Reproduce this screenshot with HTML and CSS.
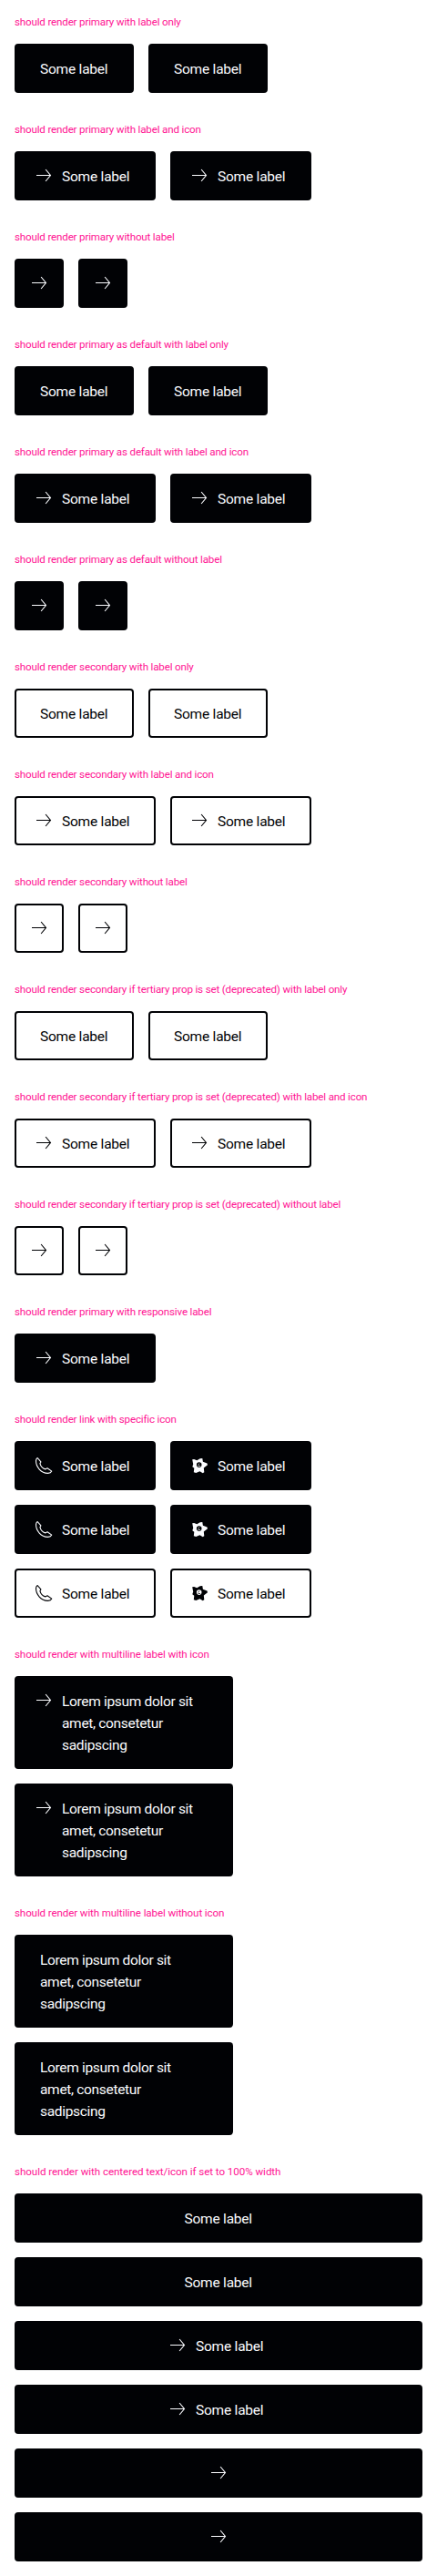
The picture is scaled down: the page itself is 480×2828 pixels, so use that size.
FILE: index.html
```html
<!DOCTYPE html>
<html lang="en">
<head>
<meta charset="utf-8">
<title>Link Pure Overview</title>
<link rel="stylesheet" href="styles.css">
</head>
<body>
<svg class="sprite" aria-hidden="true">
  <symbol id="arrow" viewBox="0 0 24 24"><path d="M4 11.5h15.500M14.100 5l5.400 6.500-5.400 6.500" fill="none" stroke="currentColor" stroke-width="1.1"/></symbol>
  <symbol id="phone" viewBox="0 0 24 24"><path d="M5.200 3.500 8.900 7.900 7.900 9.700c.8 3 2.800 5.300 5.800 6.200l2.300-1.100 4.800 3.300c-.8 1.700-2.300 2.400-4.400 2.300C9.200 20.100 3.400 13.600 3.500 6.600c.1-1.500.7-2.500 1.700-3.100z" fill="none" stroke="currentColor" stroke-width="1.1" stroke-linejoin="round"/></symbol>
  <symbol id="star" viewBox="0 0 24 24"><path fill="currentColor" fill-rule="evenodd" d="M4.200 5.200 6.200 5 9.300 6.200 12.700 4.300 15.300 4 15.900 7.800 20.500 9.600 21 11.200 16.800 14.500 17.300 19.200 15.700 20.200 12.500 18.300 8.300 20 5.800 19.300 6.300 14.800 4.300 13.300 5.200 10.600zM11.700 8.300a2.800 2.800 0 1 0 0 5.600 2.800 2.800 0 0 0 0-5.600z"/><path d="M10.300 11.300 12.200 9.700M10.500 12.700 13 12.400" fill="none" stroke="currentColor" stroke-width=".8"/></symbol>
</svg>
<main class="page">
  <section class="group"><h2 class="title">should render primary with label only</h2>
    <div class="row"><a class="btn"><span class="label">Some label</span></a><a class="btn"><span class="label">Some label</span></a></div></section>
  <section class="group"><h2 class="title">should render primary with label and icon</h2>
    <div class="row"><a class="btn has-icon"><svg class="icon"><use href="#arrow"/></svg><span class="label">Some label</span></a><a class="btn has-icon"><svg class="icon"><use href="#arrow"/></svg><span class="label">Some label</span></a></div></section>
  <section class="group"><h2 class="title">should render primary without label</h2>
    <div class="row"><a class="btn icon-only"><svg class="icon"><use href="#arrow"/></svg></a><a class="btn icon-only"><svg class="icon"><use href="#arrow"/></svg></a></div></section>
  <section class="group"><h2 class="title">should render primary as default with label only</h2>
    <div class="row"><a class="btn"><span class="label">Some label</span></a><a class="btn"><span class="label">Some label</span></a></div></section>
  <section class="group"><h2 class="title">should render primary as default with label and icon</h2>
    <div class="row"><a class="btn has-icon"><svg class="icon"><use href="#arrow"/></svg><span class="label">Some label</span></a><a class="btn has-icon"><svg class="icon"><use href="#arrow"/></svg><span class="label">Some label</span></a></div></section>
  <section class="group"><h2 class="title">should render primary as default without label</h2>
    <div class="row"><a class="btn icon-only"><svg class="icon"><use href="#arrow"/></svg></a><a class="btn icon-only"><svg class="icon"><use href="#arrow"/></svg></a></div></section>
  <section class="group"><h2 class="title">should render secondary with label only</h2>
    <div class="row"><a class="btn secondary"><span class="label">Some label</span></a><a class="btn secondary"><span class="label">Some label</span></a></div></section>
  <section class="group"><h2 class="title">should render secondary with label and icon</h2>
    <div class="row"><a class="btn secondary has-icon"><svg class="icon"><use href="#arrow"/></svg><span class="label">Some label</span></a><a class="btn secondary has-icon"><svg class="icon"><use href="#arrow"/></svg><span class="label">Some label</span></a></div></section>
  <section class="group"><h2 class="title">should render secondary without label</h2>
    <div class="row"><a class="btn secondary icon-only"><svg class="icon"><use href="#arrow"/></svg></a><a class="btn secondary icon-only"><svg class="icon"><use href="#arrow"/></svg></a></div></section>
  <section class="group"><h2 class="title">should render secondary if tertiary prop is set (deprecated) with label only</h2>
    <div class="row"><a class="btn secondary"><span class="label">Some label</span></a><a class="btn secondary"><span class="label">Some label</span></a></div></section>
  <section class="group"><h2 class="title">should render secondary if tertiary prop is set (deprecated) with label and icon</h2>
    <div class="row"><a class="btn secondary has-icon"><svg class="icon"><use href="#arrow"/></svg><span class="label">Some label</span></a><a class="btn secondary has-icon"><svg class="icon"><use href="#arrow"/></svg><span class="label">Some label</span></a></div></section>
  <section class="group"><h2 class="title">should render secondary if tertiary prop is set (deprecated) without label</h2>
    <div class="row"><a class="btn secondary icon-only"><svg class="icon"><use href="#arrow"/></svg></a><a class="btn secondary icon-only"><svg class="icon"><use href="#arrow"/></svg></a></div></section>
  <section class="group"><h2 class="title">should render primary with responsive label</h2>
    <div class="row"><a class="btn has-icon"><svg class="icon"><use href="#arrow"/></svg><span class="label">Some label</span></a></div></section>
  <section class="group"><h2 class="title">should render link with specific icon</h2>
    <div class="row"><a class="btn has-icon"><svg class="icon"><use href="#phone"/></svg><span class="label">Some label</span></a><a class="btn has-icon"><svg class="icon"><use href="#star"/></svg><span class="label">Some label</span></a></div>
    <div class="row"><a class="btn has-icon"><svg class="icon"><use href="#phone"/></svg><span class="label">Some label</span></a><a class="btn has-icon"><svg class="icon"><use href="#star"/></svg><span class="label">Some label</span></a></div>
    <div class="row"><a class="btn secondary has-icon"><svg class="icon"><use href="#phone"/></svg><span class="label">Some label</span></a><a class="btn secondary has-icon"><svg class="icon"><use href="#star"/></svg><span class="label">Some label</span></a></div></section>
  <section class="group"><h2 class="title title-relaxed">should render with multiline label with icon</h2>
    <a class="btn has-icon multiline"><svg class="icon"><use href="#arrow"/></svg><span class="label">Lorem ipsum dolor sit<br>amet, consetetur<br>sadipscing</span></a>
    <a class="btn has-icon multiline"><svg class="icon"><use href="#arrow"/></svg><span class="label">Lorem ipsum dolor sit<br>amet, consetetur<br>sadipscing</span></a></section>
  <section class="group"><h2 class="title title-relaxed">should render with multiline label without icon</h2>
    <a class="btn multiline"><span class="label">Lorem ipsum dolor sit<br>amet, consetetur<br>sadipscing</span></a>
    <a class="btn multiline"><span class="label">Lorem ipsum dolor sit<br>amet, consetetur<br>sadipscing</span></a></section>
  <section class="group"><h2 class="title title-wide">should render with centered text/icon if set to 100% width</h2>
    <a class="btn full"><span class="label">Some label</span></a>
    <a class="btn full"><span class="label">Some label</span></a>
    <a class="btn full has-icon"><svg class="icon"><use href="#arrow"/></svg><span class="label">Some label</span></a>
    <a class="btn full has-icon"><svg class="icon"><use href="#arrow"/></svg><span class="label">Some label</span></a>
    <a class="btn full icon-only"><svg class="icon"><use href="#arrow"/></svg></a>
    <a class="btn full icon-only"><svg class="icon"><use href="#arrow"/></svg></a></section>
</main>
</body>
</html>
```
FILE: styles.css
```css
* { box-sizing: border-box; }
body { margin: 0; background: #fff; font-family: Roboto, "Liberation Sans", sans-serif; }
.sprite { display: none; }
.page { display: flex; flex-direction: column; }
.group { display: flex; flex-direction: column; align-items: flex-start; gap: 16px; padding: 16px; }
.title { margin: 0; height: 16px; font-size: 11.6px; line-height: 16px; font-weight: 400; letter-spacing: -0.17px; color: #ff1493; white-space: nowrap; }
.title-relaxed { letter-spacing: -0.12px; }
.title-wide { letter-spacing: -0.06px; }
.row { display: flex; gap: 16px; }
.btn { display: flex; justify-content: center; gap: 8px; width: 131px; min-height: 54px; padding: 13px 26px; border: 2px solid #010205; border-radius: 4px; background: #010205; color: #fbfcff; }
.has-icon { width: 155px; padding-left: 18px; }
.icon-only { width: 54px; padding: 13px; }
.secondary { background: #fff; color: #010205; }
.multiline { width: 240px; justify-content: flex-start; }
.full { width: 100%; }
.full.has-icon { padding-left: 19px; }
.icon { flex: none; width: 24px; height: 24px; }
.label { flex: none; width: 75px; padding-top: 1px; margin-bottom: -1px; font-size: 15.5px; line-height: 24px; font-weight: 400; letter-spacing: -0.22px; white-space: nowrap; }
.multiline .label { width: auto; letter-spacing: -0.32px; }
```
